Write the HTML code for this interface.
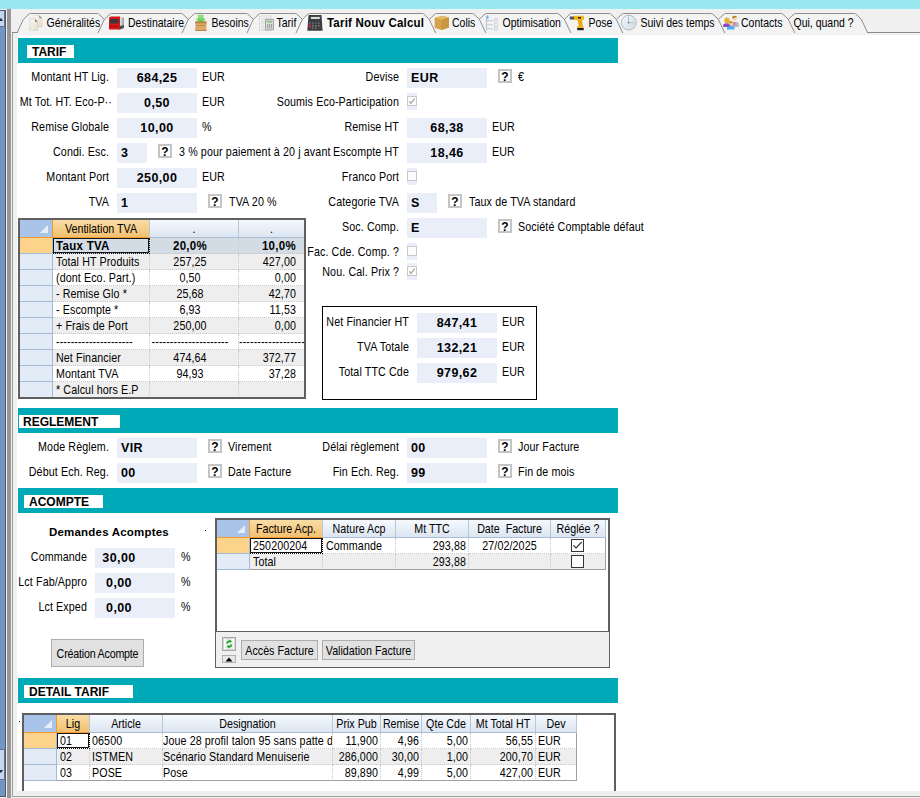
<!DOCTYPE html><html><head><meta charset="utf-8"><style>
*{margin:0;padding:0;box-sizing:border-box}
html,body{width:920px;height:798px;overflow:hidden;background:#fff;font-family:"Liberation Sans",sans-serif;font-size:10.7px;color:#000}
.a{position:absolute;white-space:nowrap}
.t{position:absolute;white-space:nowrap;height:20px;line-height:20px;transform:scaleY(1.12);letter-spacing:0.12px;margin-top:-1px}
.r{text-align:right}
.c{text-align:center}
.inp{position:absolute;height:20px;line-height:20px;background:#e9eef9;font-weight:bold;font-size:12.5px;letter-spacing:0.4px;white-space:nowrap}
.q{position:absolute;width:14px;height:14px;border:2px solid #c4c4c4;background:#fff;font-weight:bold;font-size:12px;line-height:12px;text-align:center}
.cb{position:absolute;width:10px;height:17px;background:#e9eef9}
.cb i{position:absolute;left:0;top:3px;width:10px;height:10px;border:1px solid #c8c8c8;background:#fbfbfb}
.sec{position:absolute;left:18px;width:600px;height:25px;background:#00a9b7}
.sec b{position:absolute;top:7px;height:13px;background:#fff;font-size:12px;line-height:15px;padding-left:5px}
.g{position:absolute;border:2px solid #5f5f5f;background:#fff;overflow:hidden}
.hd{position:absolute;height:18px;line-height:17px;background:linear-gradient(#f6f9fd,#dbe5f1);border-bottom:1px solid #a9bdd6;border-right:1px solid #b5c7dd;text-align:center;overflow:hidden}
.hdo{background:linear-gradient(#f9dda5,#f2c070);border-bottom:1px solid #f39a2c;border-left:1px solid #f39a2c;border-right:1px solid #b5c7dd}
.corner{position:absolute;left:0;top:0;height:18px;background:#a9c4e8;border-bottom:1px solid #f39a2c}
.corner:after{content:"";position:absolute;right:4px;bottom:4px;width:0;height:0;border-left:8px solid transparent;border-bottom:8px solid #e8eef8}
.sel{position:absolute;left:0;background:#e3ebf6;border-bottom:1px solid #a3bad6;border-right:1px solid #a3bad6}
.selo{background:#fdd38c;border-bottom:1px solid #a3bad6}
.cell{position:absolute;height:16px;line-height:15px;overflow:hidden;white-space:nowrap;border-bottom:1px dotted #c8c8c8;border-right:1px dotted #c8c8c8}
.cell s,.hd s,.btn s{text-decoration:none;display:inline-block;transform:scaleY(1.12);position:relative;top:1px}
.cell{letter-spacing:0.1px}
.btn{position:absolute;background:#e1e1e1;border:1px solid #adadad;text-align:center;white-space:nowrap}
</style></head><body>
<div class="a" style="left:0;top:0;width:920px;height:9px;background:#98e9f0"></div>
<div class="a" style="left:0;top:9px;width:11px;height:789px;background:#f0f0f0"></div>
<div class="a" style="left:0;top:10px;width:6px;height:787px;background:#7296c2;border-top:1px solid #4c5870;border-right:1px solid #585858;border-bottom:1px solid #4c5870"></div>
<div class="a" style="left:0;top:11px;width:5px;height:16px;background:#c7d6ef;border-right:1px solid #5c72a2;border-bottom:1px solid #5c72a2"></div>
<svg class="a" style="left:0;top:17px" width="4" height="5"><path d="M-2 4 L1 1 L3 4 Z" fill="#1e2a40"/></svg>
<div class="a" style="left:0;top:749px;width:5px;height:16px;background:#c7d6ef;border-right:1px solid #5c72a2;border-bottom:1px solid #5c72a2;border-top:1px solid #5c72a2"></div>
<div class="a" style="left:0;top:764px;width:5px;height:16px;background:#c7d6ef;border-right:1px solid #5c72a2;border-bottom:1px solid #5c72a2"></div>
<svg class="a" style="left:0;top:769px" width="4" height="5"><path d="M-2 1 L1 4 L3 1 Z" fill="#1e2a40"/></svg>
<div class="a" style="left:7px;top:9px;width:4px;height:789px;background:#979797"></div>
<div class="a" style="left:11px;top:9px;width:909px;height:789px;background:#f0f0f0"></div>
<div class="a" style="left:12px;top:32px;width:908px;height:765px;border-left:1px solid #a0a0a0;border-top:1px solid #a0a0a0;border-bottom:1px solid #a0a0a0"></div>
<div class="a" style="left:17px;top:35px;width:903px;height:756px;background:#fff"></div>
<svg class="a" style="left:0;top:0" width="920" height="36"><path d="M12 32.5 H17.5" stroke="#8a8a8a" fill="none"/><path d="M867 32.5 H920" stroke="#8a8a8a" fill="none"/><path d="M17 34 L23.3 19.5 Q24.2 18.6 29 14 Q29.5 13.5 30.3 13.5 L97.5 13.5 Q98.0 13.5 98.7 14 L104.0 19 Q104.3 19.4 104.5 19.8 L110.8 34 Z" fill="#f3f3f3"/><path d="M17 33 L23.3 19.5 Q24.2 18.6 29 14 Q29.5 13.5 30.3 13.5 L97.5 13.5 Q98.0 13.5 98.7 14 L104.0 19 Q104.3 19.4 104.5 19.8 L110.8 33" fill="none" stroke="#8e8e8e" stroke-width="1"/><path d="M98 34 L104.3 19.5 Q105.2 18.6 110 14 Q110.5 13.5 111.3 13.5 L181.5 13.5 Q182.0 13.5 182.7 14 L188.0 19 Q188.3 19.4 188.5 19.8 L194.8 34 Z" fill="#f3f3f3"/><path d="M98 33 L104.3 19.5 Q105.2 18.6 110 14 Q110.5 13.5 111.3 13.5 L181.5 13.5 Q182.0 13.5 182.7 14 L188.0 19 Q188.3 19.4 188.5 19.8 L194.8 33" fill="none" stroke="#8e8e8e" stroke-width="1"/><path d="M182 34 L188.3 19.5 Q189.2 18.6 194 14 Q194.5 13.5 195.3 13.5 L246.5 13.5 Q247.0 13.5 247.7 14 L253.0 19 Q253.3 19.4 253.5 19.8 L259.8 34 Z" fill="#f3f3f3"/><path d="M182 33 L188.3 19.5 Q189.2 18.6 194 14 Q194.5 13.5 195.3 13.5 L246.5 13.5 Q247.0 13.5 247.7 14 L253.0 19 Q253.3 19.4 253.5 19.8 L259.8 33" fill="none" stroke="#8e8e8e" stroke-width="1"/><path d="M247 34 L253.3 19.5 Q254.2 18.6 259 14 Q259.5 13.5 260.3 13.5 L295.5 13.5 Q296.0 13.5 296.7 14 L302.0 19 Q302.3 19.4 302.5 19.8 L308.8 34 Z" fill="#f3f3f3"/><path d="M247 33 L253.3 19.5 Q254.2 18.6 259 14 Q259.5 13.5 260.3 13.5 L295.5 13.5 Q296.0 13.5 296.7 14 L302.0 19 Q302.3 19.4 302.5 19.8 L308.8 33" fill="none" stroke="#8e8e8e" stroke-width="1"/><path d="M782 34 L788.3 19.5 Q789.2 18.6 794 14 Q794.5 13.5 795.3 13.5 L854.5 13.5 Q855.0 13.5 855.7 14 L861.0 19 Q861.3 19.4 861.5 19.8 L867.8 34 Z" fill="#f3f3f3"/><path d="M782 33 L788.3 19.5 Q789.2 18.6 794 14 Q794.5 13.5 795.3 13.5 L854.5 13.5 Q855.0 13.5 855.7 14 L861.0 19 Q861.3 19.4 861.5 19.8 L867.8 33" fill="none" stroke="#8e8e8e" stroke-width="1"/><path d="M712 34 L718.3 19.5 Q719.2 18.6 724 14 Q724.5 13.5 725.3 13.5 L781.5 13.5 Q782.0 13.5 782.7 14 L788.0 19 Q788.3 19.4 788.5 19.8 L794.8 34 Z" fill="#f3f3f3"/><path d="M712 33 L718.3 19.5 Q719.2 18.6 724 14 Q724.5 13.5 725.3 13.5 L781.5 13.5 Q782.0 13.5 782.7 14 L788.0 19 Q788.3 19.4 788.5 19.8 L794.8 33" fill="none" stroke="#8e8e8e" stroke-width="1"/><path d="M610 34 L616.3 19.5 Q617.2 18.6 622 14 Q622.5 13.5 623.3 13.5 L711.5 13.5 Q712.0 13.5 712.7 14 L718.0 19 Q718.3 19.4 718.5 19.8 L724.8 34 Z" fill="#f3f3f3"/><path d="M610 33 L616.3 19.5 Q617.2 18.6 622 14 Q622.5 13.5 623.3 13.5 L711.5 13.5 Q712.0 13.5 712.7 14 L718.0 19 Q718.3 19.4 718.5 19.8 L724.8 33" fill="none" stroke="#8e8e8e" stroke-width="1"/><path d="M558 34 L564.3 19.5 Q565.2 18.6 570 14 Q570.5 13.5 571.3 13.5 L609.5 13.5 Q610.0 13.5 610.7 14 L616.0 19 Q616.3 19.4 616.5 19.8 L622.8 34 Z" fill="#f3f3f3"/><path d="M558 33 L564.3 19.5 Q565.2 18.6 570 14 Q570.5 13.5 571.3 13.5 L609.5 13.5 Q610.0 13.5 610.7 14 L616.0 19 Q616.3 19.4 616.5 19.8 L622.8 33" fill="none" stroke="#8e8e8e" stroke-width="1"/><path d="M473 34 L479.3 19.5 Q480.2 18.6 485 14 Q485.5 13.5 486.3 13.5 L557.6 13.5 Q558.1 13.5 558.8000000000001 14 L564.1 19 Q564.4 19.4 564.6 19.8 L570.9 34 Z" fill="#f3f3f3"/><path d="M473 33 L479.3 19.5 Q480.2 18.6 485 14 Q485.5 13.5 486.3 13.5 L557.6 13.5 Q558.1 13.5 558.8000000000001 14 L564.1 19 Q564.4 19.4 564.6 19.8 L570.9 33" fill="none" stroke="#8e8e8e" stroke-width="1"/><path d="M423 34 L429.3 19.5 Q430.2 18.6 435 14 Q435.5 13.5 436.3 13.5 L472.6 13.5 Q473.1 13.5 473.8 14 L479.1 19 Q479.40000000000003 19.4 479.6 19.8 L485.90000000000003 34 Z" fill="#f3f3f3"/><path d="M423 33 L429.3 19.5 Q430.2 18.6 435 14 Q435.5 13.5 436.3 13.5 L472.6 13.5 Q473.1 13.5 473.8 14 L479.1 19 Q479.40000000000003 19.4 479.6 19.8 L485.90000000000003 33" fill="none" stroke="#8e8e8e" stroke-width="1"/><path d="M296 34 L302.3 19.5 Q303.2 18.6 308 14 Q308.5 13.5 309.3 13.5 L422.4 13.5 Q422.9 13.5 423.59999999999997 14 L428.9 19 Q429.2 19.4 429.4 19.8 L435.7 34 Z" fill="#f7f7f7"/><path d="M296 33 L302.3 19.5 Q303.2 18.6 308 14 Q308.5 13.5 309.3 13.5 L422.4 13.5 Q422.9 13.5 423.59999999999997 14 L428.9 19 Q429.2 19.4 429.4 19.8 L435.7 33" fill="none" stroke="#8e8e8e" stroke-width="1"/></svg>
<div class="a" style="left:46.5px;top:14px;line-height:17px;transform:scaleY(1.18);transform-origin:50% 4px;font-size:10.5px;color:#000;">Généralités</div>
<div class="a" style="left:128px;top:14px;line-height:17px;transform:scaleY(1.18);transform-origin:50% 4px;font-size:10.5px;color:#000;">Destinataire</div>
<div class="a" style="left:211.5px;top:14px;line-height:17px;transform:scaleY(1.18);transform-origin:50% 4px;font-size:10.5px;color:#000;">Besoins</div>
<div class="a" style="left:276.5px;top:14px;line-height:17px;transform:scaleY(1.18);transform-origin:50% 4px;font-size:10.5px;color:#000;">Tarif</div>
<div class="a" style="left:327px;top:14px;line-height:17px;transform:scaleY(1.18);transform-origin:50% 4px;font-weight:bold;font-size:11.5px;letter-spacing:0.2px;">Tarif Nouv Calcul</div>
<div class="a" style="left:452px;top:14px;line-height:17px;transform:scaleY(1.18);transform-origin:50% 4px;font-size:10.5px;color:#000;">Colis</div>
<div class="a" style="left:502.5px;top:14px;line-height:17px;transform:scaleY(1.18);transform-origin:50% 4px;font-size:10.5px;color:#000;">Optimisation</div>
<div class="a" style="left:588.5px;top:14px;line-height:17px;transform:scaleY(1.18);transform-origin:50% 4px;font-size:10.5px;color:#000;">Pose</div>
<div class="a" style="left:640.5px;top:14px;line-height:17px;transform:scaleY(1.18);transform-origin:50% 4px;font-size:10.5px;color:#000;">Suivi des temps</div>
<div class="a" style="left:741px;top:14px;line-height:17px;transform:scaleY(1.18);transform-origin:50% 4px;font-size:10.5px;color:#000;">Contacts</div>
<div class="a" style="left:793.5px;top:14px;line-height:17px;transform:scaleY(1.18);transform-origin:50% 4px;font-size:10.5px;color:#000;">Qui, quand ?</div>
<svg class="a" style="left:0;top:0" width="920" height="36"><defs><linearGradient id="gp" x1="0" y1="0" x2="1" y2="1"><stop offset="0" stop-color="#fbf8f1"/><stop offset="1" stop-color="#e4dccd"/></linearGradient><linearGradient id="gt" x1="0" y1="0" x2="1" y2="0"><stop offset="0" stop-color="#e8e8e8"/><stop offset="1" stop-color="#9a9a9a"/></linearGradient><linearGradient id="gg" x1="0" y1="0" x2="0" y2="1"><stop offset="0" stop-color="#a8e890"/><stop offset="1" stop-color="#3cc83c"/></linearGradient><linearGradient id="gc" x1="0" y1="0" x2="1" y2="1"><stop offset="0" stop-color="#f4f8fa"/><stop offset="1" stop-color="#cfdbe3"/></linearGradient></defs><path d="M34 15.3 H39.5 L42 18 V27 H34 Z" fill="url(#gp)" stroke="#d5ccbb" stroke-width="0.5"/><path d="M39.3 15.5 L39.3 18.2 L42 18.2 Z" fill="#8a8580"/><path d="M29.8 18.8 H35.3 L37.8 21.5 V30.5 H29.8 Z" fill="url(#gp)" stroke="#d5ccbb" stroke-width="0.5"/><path d="M35.1 19 L35.1 21.7 L37.8 21.7 Z" fill="#7a7570"/><path d="M111 16.6 H120 V29.5 H109 V19 Q109 16.6 111 16.6 Z" fill="#d8161a"/><path d="M110 19 H118.5 V23.5 H110 Z" fill="#3a3a3a"/><rect x="109.5" y="26" width="9.5" height="1" fill="#a01010"/><path d="M120 16.8 L124 17.8 V26.5 L120 27 Z" fill="url(#gt)"/><path d="M119.5 26 L124 25 V28 L119.5 29.7 Z" fill="#505050"/><path d="M198.3 15 H203.2 V19 H205.4 L200.8 23.2 L196.2 19 H198.3 Z" fill="url(#gg)" stroke="#58b848" stroke-width="0.4"/><path d="M195.3 22 H206.5 V30.5 H195.3 Z" fill="#dcaa64"/><rect x="195.3" y="21.2" width="11.2" height="2.2" fill="#b88848"/><rect x="196.5" y="25" width="8.8" height="1" fill="#c08a48"/><rect x="195.3" y="30" width="11.2" height="0.8" fill="#9a7040"/><path d="M259.5 16 H270.8 V30.5 H259.5 Z" fill="#f2f2f2" stroke="#c8c8c8" stroke-width="0.6"/><g fill="#d0d0d0"><rect x="261" y="18.5" width="8" height="0.8"/><rect x="261" y="21" width="4" height="0.8"/><rect x="261" y="23.5" width="4" height="0.8"/><rect x="261" y="26" width="4" height="0.8"/><rect x="261" y="28.5" width="4" height="0.8"/></g><path d="M265.5 19.3 H273.5 V30 H265.5 Z" fill="#dcdcdc" stroke="#8a8a8a" stroke-width="0.7"/><rect x="266.8" y="20.6" width="5.4" height="2" fill="#8cc08c"/><g fill="#a0a0a0"><rect x="267" y="24" width="1.2" height="4.5"/><rect x="269" y="24" width="1.2" height="4.5"/><rect x="271" y="24" width="1.2" height="4.5"/></g><path d="M308.5 15 H321.5 L322.6 30.7 H307.3 Z" fill="#3c3e40"/><rect x="310.9" y="16.9" width="8.9" height="2.1" fill="#d8dcdc"/><g fill="#6a7a9a"><rect x="309" y="22.5" width="1.6" height="1.2"/><rect x="312" y="22.5" width="1.6" height="1.2"/><rect x="315" y="22.5" width="1.6" height="1.2"/><rect x="318" y="22.5" width="1.6" height="1.2"/></g><g fill="#7a7e80"><rect x="312" y="25" width="1.6" height="1.5"/><rect x="315" y="25" width="1.6" height="1.5"/><rect x="318" y="25" width="1.6" height="1.5"/><rect x="312" y="27.5" width="1.6" height="1.2"/><rect x="315" y="27.5" width="1.6" height="1.2"/></g><rect x="308.8" y="24.5" width="2" height="3" fill="#d02838"/><path d="M434.6 18 L442 15.8 L449 17.5 V27.5 L441.5 29.9 L434.6 28 Z" fill="#d4a24c"/><path d="M434.6 18 L442 15.8 L449 17.5 L441.5 19.8 Z" fill="#e6b860"/><path d="M441.5 19.8 L449 17.5 V27.5 L441.5 29.9 Z" fill="#c8963f"/><rect x="485.8" y="19" width="1.3" height="11" fill="#b8c8dc"/><path d="M486.3 15.5 H488.5 V19 H486.3 Z" fill="#7fb0e0"/><g fill="#cdd2da"><rect x="487" y="20" width="6" height="1.3"/><rect x="487" y="24" width="6" height="1.3"/><rect x="487" y="28" width="6" height="1.3"/></g><g fill="#eef0f4" stroke="#c8ccd2" stroke-width="0.7"><rect x="494.4" y="18.6" width="3" height="3"/><rect x="494.4" y="23.2" width="3" height="3"/><rect x="494.4" y="27.2" width="3" height="3"/></g><path d="M569.8 16.5 H574 V19.5 H569.8 Z" fill="#555"/><path d="M574 15.8 H583 Q584.2 15.8 584.2 17.8 Q584.2 20 583 20 H574 Z" fill="#f0b818"/><rect x="578" y="17" width="3" height="1.6" fill="#2a2a2a"/><path d="M577.5 20 H582 L582.8 26.5 H579 Z" fill="#e8a810"/><rect x="577.2" y="26" width="6.3" height="2.2" fill="#f0b020"/><rect x="577.2" y="28" width="6.5" height="2.2" fill="#1e1e1e"/><circle cx="628.8" cy="22.6" r="7.4" fill="url(#gc)" stroke="#a8b4bc" stroke-width="0.9"/><path d="M628.5 16.5 V22.6 H634" stroke="#98a8b4" stroke-width="0.6" fill="none"/><circle cx="628.5" cy="22.6" r="0.9" fill="#6a8090"/><circle cx="734.5" cy="18.6" r="2.2" fill="#f4d0a8"/><path d="M732 18.5 Q732 15.8 734.5 15.8 Q737 15.8 737 18 L736 17.2 Q734 17.5 732 18.5 Z" fill="#b07828"/><path d="M731 27 V23.5 Q731 21.8 734.5 21.8 Q738.8 21.8 738.8 23.5 V27 Z" fill="#b4b8cc"/><rect x="733.8" y="22" width="1.3" height="4" fill="#e07080"/><circle cx="727" cy="20.5" r="2.4" fill="#f4d0a0"/><path d="M724.3 21 Q724.3 17.5 727 17.5 Q729.8 17.5 729.8 21 L729 23 L725 23 Z" fill="#e8b020" opacity="0.9"/><path d="M723.2 27 V25 Q723.2 23.3 727 23.3 Q730.5 23.3 730.5 25 V27 Z" fill="#8a4cc0"/><circle cx="731" cy="23.5" r="2" fill="#f4cca0"/><path d="M729 23.3 Q729 21 731 21 Q733 21 733 23 Z" fill="#c89030"/><path d="M727 29.5 V27.8 Q727 26 731 26 Q734.5 26 734.5 27.8 V29.5 Z" fill="#48b0f0"/></svg>
<div class="sec" style="top:38px"><b style="left:9px;width:47px">TARIF</b></div>
<div class="t r" style="left:-11px;top:68px;width:120px;">Montant HT Lig.</div>
<div class="inp" style="left:117px;top:68px;width:80px;text-align:center;">684,25</div>
<div class="t" style="left:202px;top:68px;">EUR</div>
<div class="t r" style="left:12px;top:93px;width:100px;">Mt Tot. HT. Eco-P··</div>
<div class="inp" style="left:117px;top:93px;width:80px;text-align:center;">0,50</div>
<div class="t" style="left:202px;top:93px;">EUR</div>
<div class="t r" style="left:-11px;top:118px;width:120px;">Remise Globale</div>
<div class="inp" style="left:117px;top:118px;width:80px;text-align:center;">10,00</div>
<div class="t" style="left:202px;top:118px;">%</div>
<div class="t r" style="left:-11px;top:143px;width:120px;">Condi. Esc.</div>
<div class="inp" style="left:117px;top:143px;width:30px;text-align:left;padding-left:4px;">3</div>
<div class="q" style="left:158px;top:144px">?</div>
<div class="t" style="left:179px;top:143px;">3 % pour paiement à 20 j avant</div>
<div class="t r" style="left:-11px;top:168px;width:120px;">Montant Port</div>
<div class="inp" style="left:117px;top:168px;width:80px;text-align:center;">250,00</div>
<div class="t" style="left:202px;top:168px;">EUR</div>
<div class="t r" style="left:-11px;top:193px;width:120px;">TVA</div>
<div class="inp" style="left:117px;top:193px;width:80px;text-align:left;padding-left:4px;">1</div>
<div class="q" style="left:208px;top:194px">?</div>
<div class="t" style="left:229px;top:193px;">TVA 20 %</div>
<div class="t r" style="left:279px;top:68px;width:120px;">Devise</div>
<div class="inp" style="left:407px;top:68px;width:80px;text-align:left;padding-left:4px;">EUR</div>
<div class="q" style="left:498px;top:69px">?</div>
<div class="t" style="left:518px;top:68px;">€</div>
<div class="t r" style="left:259px;top:93px;width:140px;">Soumis Eco-Participation</div>
<div class="cb" style="left:407px;top:93px"><i><svg style="position:absolute;left:1px;top:1px" width="8" height="8"><path d="M0.3 3.3 L1.8 5.5 L5.8 0.6" stroke="#a8a8a8" stroke-width="1.3" fill="none"/></svg></i></div>
<div class="t r" style="left:279px;top:118px;width:120px;">Remise HT</div>
<div class="inp" style="left:407px;top:118px;width:80px;text-align:center;">68,38</div>
<div class="t" style="left:492px;top:118px;">EUR</div>
<div class="t r" style="left:279px;top:143px;width:120px;">Escompte HT</div>
<div class="inp" style="left:407px;top:143px;width:80px;text-align:center;">18,46</div>
<div class="t" style="left:492px;top:143px;">EUR</div>
<div class="t r" style="left:279px;top:168px;width:120px;">Franco Port</div>
<div class="cb" style="left:407px;top:168px"><i></i></div>
<div class="t r" style="left:279px;top:193px;width:120px;">Categorie TVA</div>
<div class="inp" style="left:407px;top:193px;width:30px;text-align:left;padding-left:4px;">S</div>
<div class="q" style="left:448px;top:194px">?</div>
<div class="t" style="left:469px;top:193px;">Taux de TVA standard</div>
<div class="t r" style="left:279px;top:218px;width:120px;">Soc. Comp.</div>
<div class="inp" style="left:407px;top:218px;width:80px;text-align:left;padding-left:4px;">E</div>
<div class="q" style="left:498px;top:219px">?</div>
<div class="t" style="left:518px;top:218px;">Société Comptable défaut</div>
<div class="t r" style="left:279px;top:243px;width:120px;">Fac. Cde. Comp. ?</div>
<div class="cb" style="left:407px;top:243px"><i></i></div>
<div class="t r" style="left:279px;top:263px;width:120px;">Nou. Cal. Prix ?</div>
<div class="cb" style="left:407px;top:263px"><i><svg style="position:absolute;left:1px;top:1px" width="8" height="8"><path d="M0.3 3.3 L1.8 5.5 L5.8 0.6" stroke="#a8a8a8" stroke-width="1.3" fill="none"/></svg></i></div>
<div class="g" style="left:18px;top:218px;width:288px;height:181px;">
<div class="corner" style="width:32px"></div>
<div class="hd hdo" style="left:32px;top:0;width:98px"><s>Ventilation TVA</s></div>
<div class="hd" style="left:130px;top:0;width:89px"><s>.</s></div>
<div class="hd" style="left:219px;top:0;width:66px"><s>.</s></div>
<div class="sel selo" style="top:18px;width:33px;height:16px"></div>
<div class="cell " style="left:33px;top:18px;width:97px;background:#d3dbe5;padding-left:3px;font-weight:bold;font-size:11.5px;letter-spacing:0.3px;"><s>Taux TVA</s></div>
<div class="cell c" style="left:130px;top:18px;width:89px;background:#d3dbe5;padding-right:8px;font-weight:bold;font-size:11.5px;letter-spacing:0.3px;"><s>20,0%</s></div>
<div class="cell r" style="left:219px;top:18px;width:66px;background:#d3dbe5;padding-right:8px;font-weight:bold;font-size:11.5px;letter-spacing:0.3px;"><s>10,0%</s></div>
<div class="sel" style="top:34px;width:33px;height:16px"></div>
<div class="cell " style="left:33px;top:34px;width:97px;background:#eeeeee;padding-left:3px;"><s>Total HT Produits</s></div>
<div class="cell c" style="left:130px;top:34px;width:89px;background:#eeeeee;padding-right:8px;"><s>257,25</s></div>
<div class="cell r" style="left:219px;top:34px;width:66px;background:#eeeeee;padding-right:8px;"><s>427,00</s></div>
<div class="sel" style="top:50px;width:33px;height:16px"></div>
<div class="cell " style="left:33px;top:50px;width:97px;background:#ffffff;padding-left:3px;"><s>(dont Eco. Part.)</s></div>
<div class="cell c" style="left:130px;top:50px;width:89px;background:#ffffff;padding-right:8px;"><s>0,50</s></div>
<div class="cell r" style="left:219px;top:50px;width:66px;background:#ffffff;padding-right:8px;"><s>0,00</s></div>
<div class="sel" style="top:66px;width:33px;height:16px"></div>
<div class="cell " style="left:33px;top:66px;width:97px;background:#eeeeee;padding-left:3px;"><s>- Remise Glo *</s></div>
<div class="cell c" style="left:130px;top:66px;width:89px;background:#eeeeee;padding-right:8px;"><s>25,68</s></div>
<div class="cell r" style="left:219px;top:66px;width:66px;background:#eeeeee;padding-right:8px;"><s>42,70</s></div>
<div class="sel" style="top:82px;width:33px;height:16px"></div>
<div class="cell " style="left:33px;top:82px;width:97px;background:#ffffff;padding-left:3px;"><s>- Escompte *</s></div>
<div class="cell c" style="left:130px;top:82px;width:89px;background:#ffffff;padding-right:8px;"><s>6,93</s></div>
<div class="cell r" style="left:219px;top:82px;width:66px;background:#ffffff;padding-right:8px;"><s>11,53</s></div>
<div class="sel" style="top:98px;width:33px;height:16px"></div>
<div class="cell " style="left:33px;top:98px;width:97px;background:#eeeeee;padding-left:3px;"><s>+ Frais de Port</s></div>
<div class="cell c" style="left:130px;top:98px;width:89px;background:#eeeeee;padding-right:8px;"><s>250,00</s></div>
<div class="cell r" style="left:219px;top:98px;width:66px;background:#eeeeee;padding-right:8px;"><s>0,00</s></div>
<div class="sel" style="top:114px;width:33px;height:16px"></div>
<div class="cell " style="left:33px;top:114px;width:97px;background:#ffffff;padding-left:3px;"><s>---------------------</s></div>
<div class="cell c" style="left:130px;top:114px;width:89px;background:#ffffff;padding-right:8px;"><s>---------------------</s></div>
<div class="cell r" style="left:219px;top:114px;width:66px;background:#ffffff;padding-right:8px;"><s>-----------------------</s></div>
<div class="sel" style="top:130px;width:33px;height:16px"></div>
<div class="cell " style="left:33px;top:130px;width:97px;background:#eeeeee;padding-left:3px;"><s>Net Financier</s></div>
<div class="cell c" style="left:130px;top:130px;width:89px;background:#eeeeee;padding-right:8px;"><s>474,64</s></div>
<div class="cell r" style="left:219px;top:130px;width:66px;background:#eeeeee;padding-right:8px;"><s>372,77</s></div>
<div class="sel" style="top:146px;width:33px;height:16px"></div>
<div class="cell " style="left:33px;top:146px;width:97px;background:#ffffff;padding-left:3px;"><s>Montant TVA</s></div>
<div class="cell c" style="left:130px;top:146px;width:89px;background:#ffffff;padding-right:8px;"><s>94,93</s></div>
<div class="cell r" style="left:219px;top:146px;width:66px;background:#ffffff;padding-right:8px;"><s>37,28</s></div>
<div class="sel" style="top:162px;width:33px;height:16px"></div>
<div class="cell " style="left:33px;top:162px;width:97px;background:#eeeeee;padding-left:3px;"><s>* Calcul hors E.P</s></div>
<div class="cell c" style="left:130px;top:162px;width:89px;background:#eeeeee;padding-right:8px;"></div>
<div class="cell r" style="left:219px;top:162px;width:66px;background:#eeeeee;padding-right:8px;"></div>
<div class="a" style="left:33px;top:18px;width:96px;height:15px;border:1px solid #151515"></div>
<div class="a" style="left:33px;top:18px;width:97px;height:16px;border-right:1px dotted #151515;border-bottom:1px dotted #151515"></div>
</div>
<div class="a" style="left:322px;top:306px;width:215px;height:94px;border:1px solid #000"></div>
<div class="t r" style="left:289px;top:313px;width:120px;">Net Financier HT</div>
<div class="inp" style="left:417px;top:313px;width:80px;text-align:center;">847,41</div>
<div class="t" style="left:502px;top:313px;">EUR</div>
<div class="t r" style="left:289px;top:338px;width:120px;">TVA Totale</div>
<div class="inp" style="left:417px;top:338px;width:80px;text-align:center;">132,21</div>
<div class="t" style="left:502px;top:338px;">EUR</div>
<div class="t r" style="left:289px;top:363px;width:120px;">Total TTC Cde</div>
<div class="inp" style="left:417px;top:363px;width:80px;text-align:center;">979,62</div>
<div class="t" style="left:502px;top:363px;">EUR</div>
<div class="sec" style="top:408px"><b style="left:1px;width:101px;padding-left:4px">REGLEMENT</b></div>
<div class="t r" style="left:-11px;top:438px;width:120px;">Mode Règlem.</div>
<div class="inp" style="left:117px;top:438px;width:80px;text-align:left;padding-left:4px;">VIR</div>
<div class="q" style="left:208px;top:439px">?</div>
<div class="t" style="left:228px;top:438px;">Virement</div>
<div class="t r" style="left:-11px;top:463px;width:120px;">Début Ech. Reg.</div>
<div class="inp" style="left:117px;top:463px;width:80px;text-align:left;padding-left:4px;">00</div>
<div class="q" style="left:208px;top:464px">?</div>
<div class="t" style="left:228px;top:463px;">Date Facture</div>
<div class="t r" style="left:279px;top:438px;width:120px;">Délai règlement</div>
<div class="inp" style="left:407px;top:438px;width:80px;text-align:left;padding-left:4px;">00</div>
<div class="q" style="left:498px;top:439px">?</div>
<div class="t" style="left:518px;top:438px;">Jour Facture</div>
<div class="t r" style="left:279px;top:463px;width:120px;">Fin Ech. Reg.</div>
<div class="inp" style="left:407px;top:463px;width:80px;text-align:left;padding-left:4px;">99</div>
<div class="q" style="left:498px;top:464px">?</div>
<div class="t" style="left:518px;top:463px;">Fin de mois</div>
<div class="sec" style="top:488px"><b style="left:6px;width:79px">ACOMPTE</b></div>
<div class="a" style="left:49px;top:522px;line-height:20px;font-weight:bold;font-size:11.5px;letter-spacing:0.2px">Demandes Acomptes</div>
<div class="t r" style="left:-33px;top:548px;width:120px;">Commande</div>
<div class="inp" style="left:95px;top:548px;width:80px;text-align:center;padding-right:32px">30,00</div>
<div class="t" style="left:181px;top:548px;">%</div>
<div class="t r" style="left:-33px;top:573px;width:120px;">Lct Fab/Appro</div>
<div class="inp" style="left:95px;top:573px;width:80px;text-align:center;padding-right:32px">0,00</div>
<div class="t" style="left:181px;top:573px;">%</div>
<div class="t r" style="left:-33px;top:598px;width:120px;">Lct Exped</div>
<div class="inp" style="left:95px;top:598px;width:80px;text-align:center;padding-right:32px">0,00</div>
<div class="t" style="left:181px;top:598px;">%</div>
<div class="btn" style="left:51px;top:639px;width:93px;height:28px;line-height:26px;letter-spacing:-0.2px"><s>Création Acompte</s></div>
<div class="a" style="left:205px;top:530px;width:1px;height:1px;background:#000"></div>
<div class="a" style="left:19px;top:721px;width:1px;height:1px;background:#000"></div>
<div class="g" style="left:215px;top:518px;width:395px;height:114px;border-bottom:1px solid #5f5f5f">
<div class="corner" style="width:32px"></div>
<div class="hd hdo" style="left:32px;top:0;width:74px"><s>Facture Acp.</s></div>
<div class="hd" style="left:106px;top:0;width:73px"><s>Nature Acp</s></div>
<div class="hd" style="left:179px;top:0;width:73px"><s>Mt TTC</s></div>
<div class="hd" style="left:252px;top:0;width:82px"><s>Date&nbsp; Facture</s></div>
<div class="hd" style="left:334px;top:0;width:55px"><s>Réglée ?</s></div>
<div class="sel selo" style="top:18px;width:33px;height:16px"></div>
<div class="cell " style="left:33px;top:18px;width:73px;background:#ffffff;padding-left:3px;"><s>250200204</s></div>
<div class="cell " style="left:106px;top:18px;width:73px;background:#ffffff;padding-left:3px;"><s>Commande</s></div>
<div class="cell r" style="left:179px;top:18px;width:73px;background:#ffffff;padding-right:2px;"><s>293,88</s></div>
<div class="cell c" style="left:252px;top:18px;width:82px;background:#ffffff;"><s>27/02/2025</s></div>
<div class="cell " style="left:334px;top:18px;width:55px;background:#ffffff;"><svg style="position:absolute;left:20px;top:1px" width="13" height="13"><rect x="0.5" y="0.5" width="12" height="12" fill="#fff" stroke="#333"/><path d="M2.3 6.3 L5 9 L10.7 3" stroke="#333" stroke-width="1.1" fill="none"/></svg></div>
<div class="sel" style="top:34px;width:33px;height:16px"></div>
<div class="cell " style="left:33px;top:34px;width:73px;background:#eeeeee;padding-left:3px;"><s>Total</s></div>
<div class="cell " style="left:106px;top:34px;width:73px;background:#eeeeee;padding-left:3px;"></div>
<div class="cell r" style="left:179px;top:34px;width:73px;background:#eeeeee;padding-right:2px;"><s>293,88</s></div>
<div class="cell c" style="left:252px;top:34px;width:82px;background:#eeeeee;"></div>
<div class="cell " style="left:334px;top:34px;width:55px;background:#eeeeee;"><svg style="position:absolute;left:20px;top:1px" width="13" height="13"><rect x="0.5" y="0.5" width="12" height="12" fill="#fff" stroke="#333"/></svg></div>
<div class="a" style="left:33px;top:18px;width:356px;height:32px;border-right:1px solid #a0a0a0;border-bottom:1px solid #a0a0a0"></div>
<div class="a" style="left:33px;top:18px;width:72px;height:15px;border:1px solid #151515"></div>
<div class="a" style="left:33px;top:18px;width:73px;height:16px;border-right:1px dotted #151515;border-bottom:1px dotted #151515"></div>
</div>
<div class="a" style="left:215px;top:631px;width:395px;height:37px;background:#f0f0f0;border:1px solid #5f5f5f;border-top:1px solid #5f5f5f"></div>
<div class="a" style="left:222px;top:637px;width:14px;height:14px;background:#fff;border:1px solid #a8a8a8;box-shadow:inset 0 0 0 1px #d8d8d8"><svg width="12" height="12" style="position:absolute;left:0;top:0"><path d="M3 1.5 H8 L10 3.5 V10.5 H3 Z" fill="#f4f4f4" stroke="#dcdcdc" stroke-width="0.6"/><path d="M4 5.5 Q4.5 2.8 7.5 3.2" stroke="#1aa41a" stroke-width="1.6" fill="none"/><path d="M6.5 1.8 L9 3.4 L6.8 5 Z" fill="#1aa41a"/><path d="M8.5 6.5 Q8 9.2 5 8.8" stroke="#1aa41a" stroke-width="1.6" fill="none"/><path d="M6 10.2 L3.5 8.6 L5.7 7 Z" fill="#1aa41a"/></svg></div>
<div class="a" style="left:222px;top:655px;width:14px;height:8px;background:#e8e8e8;border:1px solid #b0b0b0"><svg width="12" height="6" style="position:absolute;left:0;top:0"><path d="M2.5 5.5 L6 1.5 L9.5 5.5 Z" fill="#000"/></svg></div>
<div class="btn" style="left:241px;top:640px;width:77px;height:20px;line-height:18px" ><s>Accès Facture</s></div>
<div class="btn" style="left:322px;top:640px;width:93px;height:20px;line-height:18px" ><s>Validation Facture</s></div>
<div class="sec" style="top:678px"><b style="left:6px;width:109px">DETAIL TARIF</b></div>
<div class="g" style="left:22px;top:713px;width:594px;height:78px;border-bottom:none">
<div class="corner" style="width:32px"></div>
<div class="hd hdo" style="left:32px;top:0;width:34px"><s>Lig</s></div>
<div class="hd" style="left:66px;top:0;width:73px"><s>Article</s></div>
<div class="hd" style="left:139px;top:0;width:170px"><s>Designation</s></div>
<div class="hd" style="left:309px;top:0;width:48px"><s>Prix Pub</s></div>
<div class="hd" style="left:357px;top:0;width:41px"><s>Remise</s></div>
<div class="hd" style="left:398px;top:0;width:49px"><s>Qte Cde</s></div>
<div class="hd" style="left:447px;top:0;width:65px"><s>Mt Total HT</s></div>
<div class="hd" style="left:512px;top:0;width:41px"><s>Dev</s></div>
<div class="sel selo" style="top:18px;width:33px;height:16px"></div>
<div class="cell " style="left:33px;top:18px;width:33px;background:#ffffff;padding-left:3px;"><s>01</s></div>
<div class="cell " style="left:66px;top:18px;width:73px;background:#ffffff;padding-left:2px;"><s>06500</s></div>
<div class="cell " style="left:139px;top:18px;width:170px;background:#ffffff;padding-left:0px;"><s>Joue 28 profil talon 95 sans patte d</s></div>
<div class="cell r" style="left:309px;top:18px;width:48px;background:#ffffff;padding-right:2px;"><s>11,900</s></div>
<div class="cell r" style="left:357px;top:18px;width:41px;background:#ffffff;padding-right:2px;"><s>4,96</s></div>
<div class="cell r" style="left:398px;top:18px;width:49px;background:#ffffff;padding-right:2px;"><s>5,00</s></div>
<div class="cell r" style="left:447px;top:18px;width:65px;background:#ffffff;padding-right:2px;"><s>56,55</s></div>
<div class="cell " style="left:512px;top:18px;width:41px;background:#ffffff;padding-left:2px;"><s>EUR</s></div>
<div class="sel" style="top:34px;width:33px;height:16px"></div>
<div class="cell " style="left:33px;top:34px;width:33px;background:#eeeeee;padding-left:3px;"><s>02</s></div>
<div class="cell " style="left:66px;top:34px;width:73px;background:#eeeeee;padding-left:2px;"><s>ISTMEN</s></div>
<div class="cell " style="left:139px;top:34px;width:170px;background:#eeeeee;padding-left:0px;"><s>Scénario Standard Menuiserie</s></div>
<div class="cell r" style="left:309px;top:34px;width:48px;background:#eeeeee;padding-right:2px;"><s>286,000</s></div>
<div class="cell r" style="left:357px;top:34px;width:41px;background:#eeeeee;padding-right:2px;"><s>30,00</s></div>
<div class="cell r" style="left:398px;top:34px;width:49px;background:#eeeeee;padding-right:2px;"><s>1,00</s></div>
<div class="cell r" style="left:447px;top:34px;width:65px;background:#eeeeee;padding-right:2px;"><s>200,70</s></div>
<div class="cell " style="left:512px;top:34px;width:41px;background:#eeeeee;padding-left:2px;"><s>EUR</s></div>
<div class="sel" style="top:50px;width:33px;height:16px"></div>
<div class="cell " style="left:33px;top:50px;width:33px;background:#ffffff;padding-left:3px;"><s>03</s></div>
<div class="cell " style="left:66px;top:50px;width:73px;background:#ffffff;padding-left:2px;"><s>POSE</s></div>
<div class="cell " style="left:139px;top:50px;width:170px;background:#ffffff;padding-left:0px;"><s>Pose</s></div>
<div class="cell r" style="left:309px;top:50px;width:48px;background:#ffffff;padding-right:2px;"><s>89,890</s></div>
<div class="cell r" style="left:357px;top:50px;width:41px;background:#ffffff;padding-right:2px;"><s>4,99</s></div>
<div class="cell r" style="left:398px;top:50px;width:49px;background:#ffffff;padding-right:2px;"><s>5,00</s></div>
<div class="cell r" style="left:447px;top:50px;width:65px;background:#ffffff;padding-right:2px;"><s>427,00</s></div>
<div class="cell " style="left:512px;top:50px;width:41px;background:#ffffff;padding-left:2px;"><s>EUR</s></div>
<div class="a" style="left:33px;top:18px;width:520px;height:48px;border-right:1px solid #a0a0a0;border-bottom:1px solid #a0a0a0"></div>
<div class="a" style="left:33px;top:18px;width:32px;height:15px;border:1px solid #151515"></div>
<div class="a" style="left:33px;top:18px;width:33px;height:16px;border-right:1px dotted #151515;border-bottom:1px dotted #151515"></div>
</div>
</body></html>
